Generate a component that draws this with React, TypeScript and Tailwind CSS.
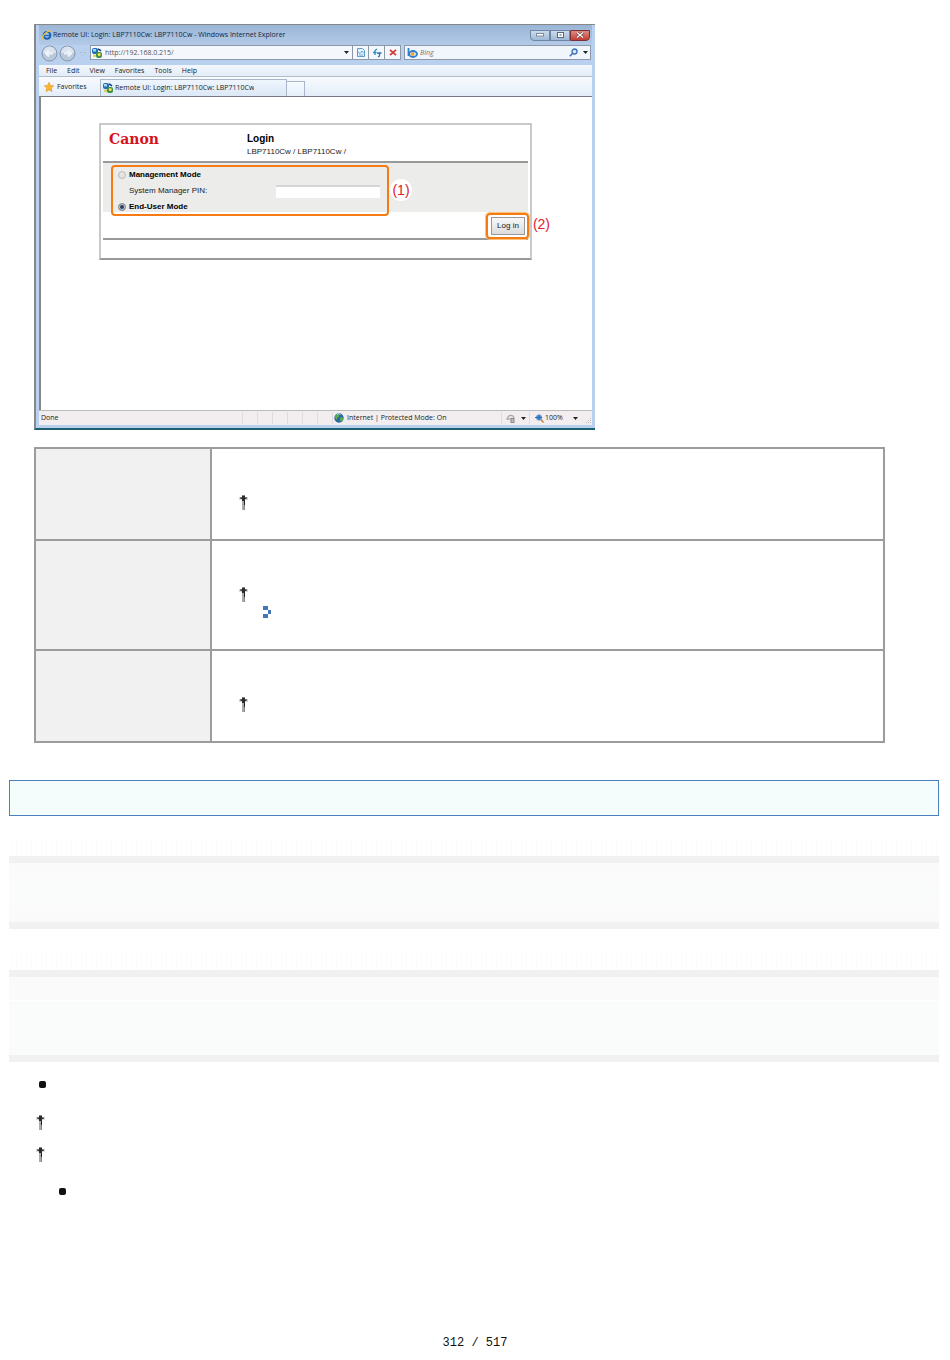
import { ReactNode } from "react";

const MENU_ITEMS = ["File", "Edit", "View", "Favorites", "Tools", "Help"];

function Dagger() {
  return (
    <svg
      width="9"
      height="15"
      viewBox="0 0 9 15"
      shapeRendering="crispEdges"
      className="block shrink-0"
    >
      <rect x="3" y="0" width="3" height="1" fill="#888" />
      <rect x="0" y="2" width="9" height="3" fill="#d8d8d8" />
      <rect x="1" y="2" width="7" height="2" fill="#777" />
      <rect x="2" y="3" width="5" height="1" fill="#333" />
      <rect x="3" y="1" width="3" height="5" fill="#2b2b2b" />
      <rect x="3" y="6" width="2" height="9" fill="#aaa" />
      <rect x="5" y="6" width="1" height="4" fill="#222" />
      <rect x="5" y="10" width="1" height="5" fill="#888" />
    </svg>
  );
}

function Bullet() {
  return (
    <svg width="7" height="7" viewBox="0 0 7 7" className="block shrink-0">
      <rect width="7" height="7" rx="2" fill="#111" />
    </svg>
  );
}

function Arrow() {
  return (
    <svg width="5" height="3" viewBox="0 0 5 3" className="block shrink-0">
      <path d="M0 0h5L2.5 3z" fill="#222" />
    </svg>
  );
}

function IeIcon() {
  return (
    <svg width="10" height="10" viewBox="0 0 10 10" className="block shrink-0">
      <circle cx="5" cy="5.3" r="3.4" fill="#a9d3f5" stroke="#1c62b4" strokeWidth="2" />
      <path d="M2 5.500h6.500" stroke="#1c62b4" strokeWidth="1.400" />
      <path d="M1 9.500C-.8 6 5 .3 9.500 1" fill="none" stroke="#f0c040" strokeWidth="1.300" />
    </svg>
  );
}

function PageIcon() {
  return (
    <svg width="10" height="10" viewBox="0 0 10 10" className="block shrink-0">
      <rect x="0" y="0" width="6" height="6" rx="2" fill="#1d6fb8" />
      <rect x="1" y="1" width="3" height="2.500" fill="#a5d4f4" />
      <rect x="4" y="4" width="6" height="6" rx="2" fill="#3f8f4c" />
      <circle cx="7.200" cy="6.500" r="1.500" fill="#ffe14d" />
      <rect x="1" y="6.500" width="3" height="2.500" rx="1" fill="#d9cf4a" />
      <path d="M6 .8l3 2" stroke="#123a70" strokeWidth="1.600" />
    </svg>
  );
}

function NavCircle({ label, flip }: { label: string; flip?: boolean }) {
  return (
    <button type="button" aria-label={label} className="block shrink-0">
      <svg
        width="17"
        height="17"
        viewBox="0 0 17 17"
        className={flip ? "block -scale-x-100" : "block"}
      >
        <circle cx="8.500" cy="8.500" r="7.500" fill="#b9c8da" stroke="#8494aa" />
        <path d="M2 8a6.500 6.500 0 0 1 13 0z" fill="#dbe4ee" />
        <path d="M12 8.500H5m3-3l-3 3 3 3" fill="none" stroke="#eef3f9" strokeWidth="2" />
      </svg>
    </button>
  );
}

function ToolButton({ label, children }: { label: string; children: ReactNode }) {
  return (
    <button
      type="button"
      aria-label={label}
      className="flex w-4 shrink-0 items-center justify-center border-l border-[#8d99a8]"
    >
      {children}
    </button>
  );
}

function TitleBar() {
  return (
    <div className="flex h-5 items-center bg-linear-to-b from-[#9ab5d6] to-[#b3cbe8] pr-[2px] pl-[3px]">
      <IeIcon />
      <span className="ml-px flex-1 truncate text-[7px] leading-5 text-[#14253c]">
        Remote UI: Login: LBP7110Cw: LBP7110Cw - Windows Internet Explorer
      </span>
      <button
        type="button"
        aria-label="Minimize"
        className="flex h-[11px] w-5 items-center justify-center rounded-bl-sm border border-[#6f86a5] bg-linear-to-b from-[#cddcee] to-[#9fb8d6]"
      >
        <svg width="8" height="4" viewBox="0 0 8 4">
          <rect x=".5" y=".5" width="7" height="2.500" fill="#fff" stroke="#7d8ba0" />
        </svg>
      </button>
      <button
        type="button"
        aria-label="Maximize"
        className="flex h-[11px] w-5 items-center justify-center border border-[#6f86a5] bg-linear-to-b from-[#cddcee] to-[#9fb8d6]"
      >
        <svg width="7" height="6" viewBox="0 0 7 6">
          <rect x=".5" y=".5" width="6" height="5" fill="#fff" stroke="#5b687b" />
          <rect x="2.500" y="2.500" width="2" height="1" fill="#4b586b" />
        </svg>
      </button>
      <button
        type="button"
        aria-label="Close"
        className="flex h-[11px] w-5 items-center justify-center rounded-br-sm border border-[#7a3136] bg-linear-to-b from-[#dc8a80] to-[#c23a33]"
      >
        <svg width="8" height="6" viewBox="0 0 8 6">
          <path d="M1 .5l6 5M7 .5l-6 5" stroke="#5c2b2b" strokeWidth="2.400" />
          <path d="M1 .5l6 5M7 .5l-6 5" stroke="#fff" strokeWidth="1.400" />
        </svg>
      </button>
    </div>
  );
}

function AddressBar() {
  return (
    <div className="flex h-5 items-start bg-[#b9d1ee] pr-px pl-[2px]">
      <div className="flex w-12 shrink-0 items-center gap-px">
        <NavCircle label="Back" />
        <NavCircle label="Forward" flip />
        <svg width="6" height="4" viewBox="0 0 6 4" className="ml-[3px]">
          <path d="M.5.5h5L3 3.500z" fill="#d6e3f2" stroke="#93a8c2" strokeWidth=".5" />
        </svg>
      </div>
      <div className="ml-px flex h-[15px] min-w-0 flex-1 border border-[#8d99a8] bg-[#f4f8fd]">
        <div className="flex min-w-0 flex-1 items-center gap-[3px] pr-[3px] pl-px">
          <PageIcon />
          <input
            type="text"
            aria-label="Address"
            defaultValue="http://192.168.0.215/"
            className="h-3 min-w-0 flex-1 bg-transparent text-[7px] text-[#555] outline-none"
          />
          <Arrow />
        </div>
        <ToolButton label="Compatibility view">
          <svg width="8" height="9" viewBox="0 0 8 9">
            <path d="M.5.5h5l2 2v6h-7z" fill="#e6f2fc" stroke="#5b9cd0" />
            <path d="M1 4l2 1.500L5 3l2 2.500M2 7h4" fill="none" stroke="#6aa9d8" />
          </svg>
        </ToolButton>
        <ToolButton label="Refresh">
          <svg width="10" height="10" viewBox="0 0 10 10">
            <path d="M3 7V2.500L5 1M1 4.500h3.500" fill="none" stroke="#2c8ccc" strokeWidth="1.300" />
            <path d="M7.500 4.500V8L6 9M5 5h4.500" fill="none" stroke="#2c6fa8" strokeWidth="1.300" />
          </svg>
        </ToolButton>
        <ToolButton label="Stop">
          <svg width="8" height="7" viewBox="0 0 8 7">
            <path d="M1 .8l6 5.400M7 .8L1 6.200" stroke="#d23a3a" strokeWidth="1.800" />
          </svg>
        </ToolButton>
      </div>
      <div className="ml-[3px] flex h-[15px] w-[187px] shrink-0 items-center border border-[#8d99a8] bg-[#f1f6fc] pr-[2px] pl-[2px]">
        <svg width="11" height="10" viewBox="0 0 11 10" className="shrink-0">
          <path d="M1.500 0v8" stroke="#2f7fd0" strokeWidth="1.800" />
          <ellipse cx="6" cy="6" rx="4" ry="3" fill="#cfe6fa" stroke="#2f7fd0" strokeWidth="1.800" />
          <circle cx="5.500" cy="6" r="2" fill="#f7a535" />
        </svg>
        <input
          type="text"
          aria-label="Search"
          placeholder="Bing"
          className="ml-[2px] h-3 min-w-0 flex-1 bg-transparent text-[7px] italic outline-none placeholder:text-[#777]"
        />
        <button type="button" aria-label="Run search">
          <svg width="9" height="9" viewBox="0 0 9 9" className="block">
            <circle cx="5.500" cy="3.500" r="2.500" fill="#d6e8fa" stroke="#3a6fb8" strokeWidth="1.300" />
            <path d="M3.500 5.500L.8 8.200" stroke="#3a6fb8" strokeWidth="1.500" />
          </svg>
        </button>
        <span className="ml-[5px]">
          <Arrow />
        </span>
      </div>
    </div>
  );
}

function TabBar() {
  return (
    <div className="flex h-5 items-end border-b border-[#777a85] bg-linear-to-b from-[#f8fbff] to-[#e3edf8] pl-[5px]">
      <button type="button" className="mb-[3px] flex w-14 shrink-0 items-center gap-[3px] text-[7px] leading-3">
        <svg width="10" height="10" viewBox="0 0 10 10" className="shrink-0">
          <path
            d="M5 .3l1.400 3.100 3.400.4-2.500 2.300.7 3.500L5 7.900 2 9.600l.7-3.500L.2 3.800l3.400-.4z"
            fill="#f8b62d"
            stroke="#dc8a1c"
            strokeWidth=".5"
          />
        </svg>
        Favorites
      </button>
      <div className="flex h-[17px] w-[187px] min-w-0 items-center gap-[2px] border border-b-0 border-[#a9b7c9] bg-linear-to-b from-[#eef5fd] to-[#dce8f6] pl-[2px] text-[7px] leading-3">
        <PageIcon />
        <span className="truncate">Remote UI: Login: LBP7110Cw: LBP7110Cw</span>
      </div>
      <button
        type="button"
        aria-label="New tab"
        className="h-[15px] w-[18px] border-t border-r border-[#a9b7c9] bg-linear-to-b from-[#f6faff] to-[#e6eff9]"
      />
    </div>
  );
}

function StatusBar() {
  return (
    <div className="flex h-[15px] items-center border-t border-[#bbb] bg-[#f2eeef] py-px text-[7px] leading-3">
      <span className="flex-1 pl-[2px]">Done</span>
      {[0, 1, 2, 3, 4, 5].map((i) => (
        <span key={i} className="h-full w-[15px] border-l border-[#e0dcde]" />
      ))}
      <span className="flex h-full w-[169px] items-center gap-[3px] border-l border-[#e0dcde] pl-px">
        <svg width="10" height="10" viewBox="0 0 10 10" className="shrink-0">
          <circle cx="5" cy="5" r="4.700" fill="#2a66a8" />
          <path d="M1 3c2-3 4-2 4 0s-2 1-2 3-2 0-2-3zM6 5c2-2 3-1 3 1S7 9 6 8z" fill="#58ad4c" />
          <path d="M3 1.500c1-1 3-.7 3.500 0" stroke="#bfe0f5" fill="none" />
        </svg>
        Internet | Protected Mode: On
      </span>
      <span className="flex h-full w-7 items-center gap-[5px] border-l border-[#e0dcde] pl-1">
        <svg width="10" height="9" viewBox="0 0 10 9" className="shrink-0">
          <path d="M2 6a3.200 3.200 0 1 1 6-2" fill="#e6e6e6" stroke="#a5a5a5" strokeWidth="1.200" />
          <path d="M0 5h5" stroke="#aaa" />
          <rect x="5" y="4.500" width="3" height="4" fill="#bbb" stroke="#8a8a8a" />
        </svg>
        <Arrow />
      </span>
      <span className="flex h-full w-[63px] items-center border-l border-[#e0dcde] pl-[5px]">
        <svg width="9" height="9" viewBox="0 0 9 9" className="shrink-0">
          <circle cx="4" cy="3.500" r="2.700" fill="#4a8fd8" stroke="#7aa8d4" />
          <path d="M0 3.500h7M4 1v5" stroke="#2f6cae" />
          <path d="M6 5.500l2.500 3" stroke="#c07a3a" strokeWidth="1.500" />
        </svg>
        <span className="ml-px w-[28px]">100%</span>
        <Arrow />
        <svg width="6" height="6" viewBox="0 0 6 6" className="mt-auto ml-auto">
          <path d="M4 0h1v1H4zM4 2h1v1H4zM2 2h1v1H2zM4 4h1v1H4zM2 4h1v1H2zM0 4h1v1H0z" fill="#bbb" />
        </svg>
      </span>
    </div>
  );
}

function LoginForm() {
  return (
    <form
      onSubmit={(e) => e.preventDefault()}
      className="w-full max-w-[433px] border-2 border-[#c9c9c9] border-b-[#999] px-[2px] text-[8px] leading-4 text-[#222]"
      style={{ fontFamily: '"Liberation Sans", Arial, sans-serif' }}
    >
      <div className="flex h-[38px] items-start border-b-2 border-[#999] pt-[6px] pl-[6px]">
        <div
          className="w-[138px] text-[14px] leading-4 font-bold text-[#d6131c]"
          style={{ fontFamily: '"DejaVu Serif", serif' }}
        >
          Canon
        </div>
        <div>
          <h1 className="text-[10px] leading-4 font-bold text-black">Login</h1>
          <p className="leading-[10px]">LBP7110Cw / LBP7110Cw /</p>
        </div>
      </div>
      <div className="relative h-[49px] bg-[#ececeb] pt-1 pl-[15px]">
        <div className="flex items-center gap-[3px]">
          <input
            id="mode-management"
            type="radio"
            name="mode"
            className="size-2 appearance-none rounded-full border border-[#bbb] bg-[#e4e4e4] checked:border-[#999] checked:bg-[#24425f] checked:ring-1 checked:ring-[#ccc] checked:ring-inset"
          />
          <label htmlFor="mode-management" className="font-bold text-black">
            Management Mode
          </label>
        </div>
        <div className="flex items-center pl-[11px]">
          <label htmlFor="pin" className="w-[147px]">
            System Manager PIN:
          </label>
          <input
            id="pin"
            type="password"
            className="h-[13px] w-[104px] border-t-2 border-[#d6d6da] bg-white outline-none"
          />
        </div>
        <div className="flex items-center gap-[3px]">
          <input
            id="mode-user"
            type="radio"
            name="mode"
            defaultChecked
            className="size-2 appearance-none rounded-full border border-[#bbb] bg-[#e4e4e4] checked:border-[#999] checked:bg-[#24425f] checked:ring-1 checked:ring-[#ccc] checked:ring-inset"
          />
          <label htmlFor="mode-user" className="font-bold text-black">
            End-User Mode
          </label>
        </div>
        <div className="pointer-events-none absolute top-[2px] left-2 h-[51px] w-[278px] rounded-sm border-2 border-[#f57c14]" />
        <span className="absolute top-4 left-[287px] flex size-[22px] items-center justify-center rounded-full bg-white text-[14px] text-[#e0202c]">
          (1)
        </span>
      </div>
      <div className="relative flex h-[28px] justify-end border-b-2 border-[#999] pt-[5px] pr-[3px]">
        <button
          type="submit"
          className="h-[18px] w-[34px] border border-[#999] bg-linear-to-b from-[#f8f8f8] to-[#dcdcdc] text-center"
        >
          Log in
        </button>
        <div className="pointer-events-none absolute top-px -right-px h-[26px] w-[43px] rounded-sm border-2 border-[#f57c14] ring-1 ring-[#fbc27c]" />
        <span className="absolute top-1 -right-[22px] text-[14px] text-[#e0202c]">(2)</span>
      </div>
      <div className="h-[18px]" />
    </form>
  );
}

function BrowserWindow() {
  return (
    <div
      className="max-w-[561px] border-t border-b-2 border-l-2 border-t-[#888] border-b-[#1a6070] border-l-[#888] text-[#222]"
      style={{ fontFamily: '"Open Sans", "Noto Sans", sans-serif' }}
    >
      <div className="border-r-3 border-b-3 border-l-3 border-[#b9d1ee]">
        <TitleBar />
        <AddressBar />
        <div className="flex h-3 items-center gap-[10px] border-b border-[#b5bcc6] bg-linear-to-b from-[#f2f7fd] to-[#e3edf8] pl-[7px] text-[7px] leading-3">
          {MENU_ITEMS.map((item) => (
            <button type="button" key={item}>
              {item}
            </button>
          ))}
        </div>
        <TabBar />
        <div className="h-[313px] border-l-2 border-[#888] bg-white px-[58px] pt-[26px]">
          <LoginForm />
        </div>
        <StatusBar />
      </div>
    </div>
  );
}

function SettingsTable() {
  return (
    <table className="w-full border-collapse">
      <tbody>
        {[false, true, false].map((hasLink, i) => (
          <tr key={i}>
            <th className="w-[176px] border-2 border-[#9c9c9c] bg-[#f1f1f1]" />
            <td className="border-2 border-[#9c9c9c] px-[27px] pt-[46px] align-top">
              <div className="h-11">
                <Dagger />
              </div>
              {hasLink && (
                <div className="-mt-[25px] mb-[7px] h-9 pl-6">
                  <svg width="8" height="12" viewBox="0 0 8 12" shapeRendering="crispEdges">
                    <path d="M0 0h5v4H0zM5 4h3v4H5zM0 8h5v4H0z" fill="#4478b4" />
                  </svg>
                </div>
              )}
            </td>
          </tr>
        ))}
      </tbody>
    </table>
  );
}

function Ticks() {
  return (
    <div className="h-4 bg-[repeating-linear-gradient(90deg,#fff_0_2px,#fbfbfb_2px_3px,#fff_3px_5px)]" />
  );
}

export default function App() {
  return (
    <main className="bg-white px-[9px] pt-6 pb-2">
      <section className="pl-[25px]">
        <BrowserWindow />
        <div className="mt-[17px] pr-14">
          <SettingsTable />
        </div>
      </section>

      <div className="mt-[37px] mr-[2px] h-9 border border-[#4a80be] bg-[#f5fcfc]" />

      <section className="mt-6 mr-[2px]">
        <Ticks />
        <div className="h-[73px] border-y-7 border-[#f1f1f1] bg-linear-to-b from-[#fafafa] via-[#fafcfb] to-[#fafafa]" />
      </section>

      <section className="mt-[25px] mr-[2px]">
        <Ticks />
        <div className="h-[92px] border-y-7 border-[#f1f1f1] bg-[#fafcfb]">
          <div className="h-6 border-b border-white bg-[#fafafa]" />
        </div>
      </section>

      <ul className="mt-[19px]">
        <li className="h-[34px] pl-[30px]">
          <Bullet />
        </li>
        <li className="h-8 pl-[27px]">
          <Dagger />
        </li>
        <li className="h-[41px] pl-[27px]">
          <Dagger />
        </li>
        <li className="pl-[50px]">
          <Bullet />
        </li>
      </ul>

      <footer
        className="mt-[140px] text-center text-[12px] leading-4 text-[#111]"
        style={{ fontFamily: '"Liberation Mono", monospace' }}
      >
        312 / 517
      </footer>
    </main>
  );
}
